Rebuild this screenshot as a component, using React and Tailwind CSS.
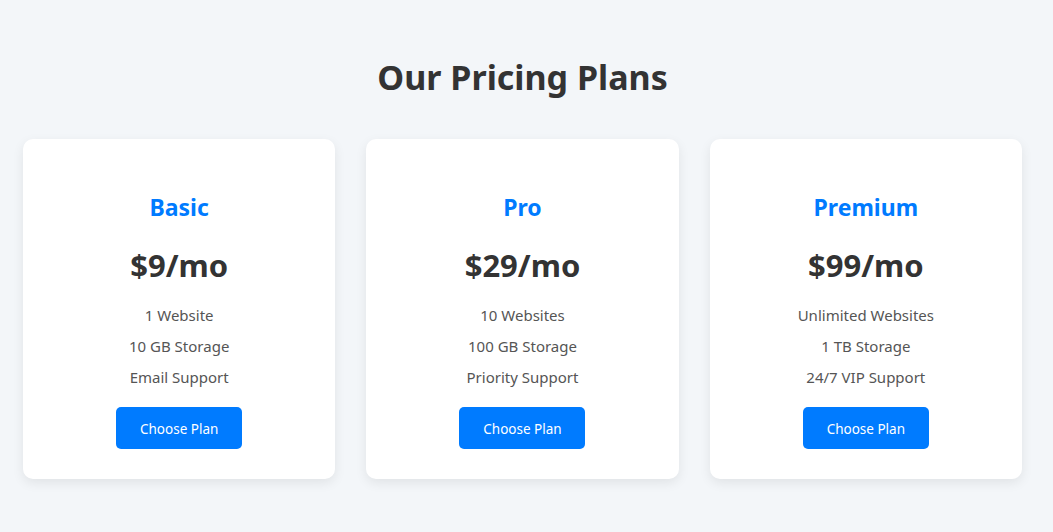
import React from "react";

const plans = [
  { name: "Basic", price: "$9/mo", features: ["1 Website", "10 GB Storage", "Email Support"] },
  { name: "Pro", price: "$29/mo", features: ["10 Websites", "100 GB Storage", "Priority Support"] },
  { name: "Premium", price: "$99/mo", features: ["Unlimited Websites", "1 TB Storage", "24/7 VIP Support"] },
];

export default function App() {
  return (
    <div
      className="min-h-[532px] w-full bg-[#f3f6f9] pl-[23px] pr-[31px] pt-[53px] pb-[53px]"
      style={{ fontFamily: '"Noto Sans", "Open Sans", sans-serif' }}
    >
      <h1 className="text-center text-[34px] leading-[48px] font-bold text-[#333333]">Our Pricing Plans</h1>
      <div className="mt-[38px] flex gap-[31px]">
        {plans.map((p) => (
          <div
            key={p.name}
            className="w-[313px] h-[340px] bg-white rounded-[10px] shadow-[0_4px_12px_rgba(0,0,0,0.08)] flex flex-col items-center pt-[52px]"
          >
            <h2 className="text-[23px] leading-[32px] font-bold text-[#007bff]">{p.name}</h2>
            <div className="mt-[22px] text-[31px] leading-[40px] font-bold text-[#333333]">{p.price}</div>
            <ul className="mt-[15px] flex flex-col items-center">
              {p.features.map((f) => (
                <li key={f} className="text-[15px] leading-[31px] text-[#555555]">{f}</li>
              ))}
            </ul>
            <button className="mt-[14px] w-[126px] h-[42px] rounded-[5px] bg-[#007bff] text-white text-[13.5px] pt-[2px]">
              Choose Plan
            </button>
          </div>
        ))}
      </div>
    </div>
  );
}
